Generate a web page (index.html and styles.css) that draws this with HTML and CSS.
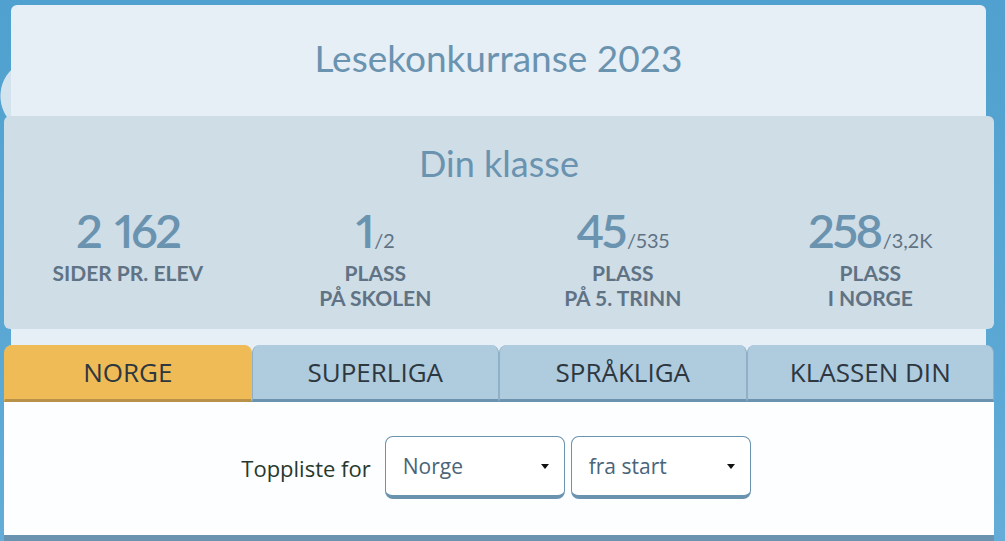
FILE: index.html
```html
<!DOCTYPE html>
<html lang="no">
<head>
<meta charset="utf-8">
<title>Lesekonkurranse 2023</title>
<link rel="stylesheet" href="styles.css">
</head>
<body>
<div class="page">
  <header class="hero">
    <h1 class="title">Lesekonkurranse 2023</h1>
  </header>
  <section class="stats">
    <h2 class="stats-title">Din klasse</h2>
    <div class="stats-grid">
      <div class="stat">
        <div class="stat-value">2 162</div>
        <div class="stat-label">SIDER PR. ELEV</div>
      </div>
      <div class="stat">
        <div class="stat-value">1<span class="of">/2</span></div>
        <div class="stat-label">PLASS<br>PÅ SKOLEN</div>
      </div>
      <div class="stat">
        <div class="stat-value">45<span class="of">/535</span></div>
        <div class="stat-label">PLASS<br>PÅ 5. TRINN</div>
      </div>
      <div class="stat">
        <div class="stat-value">258<span class="of">/3,2K</span></div>
        <div class="stat-label">PLASS<br>I NORGE</div>
      </div>
    </div>
  </section>
  <nav class="tabs">
    <div class="tab tab-active">NORGE</div>
    <div class="tab">SUPERLIGA</div>
    <div class="tab">SPRÅKLIGA</div>
    <div class="tab">KLASSEN DIN</div>
  </nav>
  <section class="panel">
    <div class="filter-row">
      <span class="filter-label">Toppliste for</span>
      <div class="select"><span>Norge</span><span class="caret"></span></div>
      <div class="select"><span>fra start</span><span class="caret"></span></div>
    </div>
  </section>
</div>
</body>
</html>
```

FILE: styles.css
```css
html, body {
  margin: 0;
  padding: 0;
}

body {
  background:
    radial-gradient(ellipse 30px 34px at 30px 96px, #d3e4ef 97%, rgba(211, 228, 239, 0) 100%),
    linear-gradient(180deg, #50a1cf 0%, #5aa7d4 60%, #63add8 100%);
  font-family: Lato, "Open Sans", sans-serif;
  overflow: hidden;
  height: 541px;
}

.page {
  width: 975px;
  margin: 5px 0 0 11px;
  background: #e6eef6;
  border-radius: 6px 6px 0 0;
}

.hero {
  padding: 31px 0 36px;
  text-align: center;
}

.title {
  margin: 0;
  font-size: 37px;
  line-height: 44px;
  font-weight: 400;
  color: #6a93b0;
}

.stats {
  margin: 0 -8px 0 -7px;
  background: #cfdde7;
  border-radius: 6px;
  padding: 26px 0 19px;
}

.stats-title {
  margin: 0;
  text-align: center;
  font-size: 36px;
  line-height: 42px;
  font-weight: 400;
  color: #6a93b0;
}

.stats-grid {
  display: grid;
  grid-template-columns: repeat(4, 1fr);
  margin-top: 21px;
}

.stat {
  text-align: center;
}

.stat-value {
  font-size: 47px;
  line-height: 50px;
  font-weight: 600;
  letter-spacing: -2.5px;
  word-spacing: 5px;
  font-variant-numeric: proportional-nums;
  color: #6a93b0;
}

.stat-value .of {
  font-size: 20px;
  line-height: 1;
  font-weight: 400;
  letter-spacing: 0;
  margin-left: 2px;
  color: #607384;
}

.stat-label {
  margin-top: 5px;
  font-size: 21px;
  line-height: 25px;
  font-weight: 700;
  color: #607384;
}

.tabs {
  display: flex;
  margin: 16px -8px 0 -7px;
}

.tab {
  flex: 1;
  height: 54px;
  box-sizing: content-box;
  display: flex;
  align-items: center;
  justify-content: center;
  background: #afcbde;
  border-left: 1px solid #8fb0c6;
  border-right: 1px solid #8fb0c6;
  border-bottom: 3px solid #6a93b0;
  border-radius: 8px 8px 0 0;
  font-family: "Open Sans", sans-serif;
  font-size: 26px;
  color: #2d3740;
}

.tab-active {
  background: #efbb57;
  border-left-color: #efbb57;
  border-right-color: #efbb57;
  border-bottom-color: #b9924a;
}

.panel {
  margin: 0 -8px 0 -7px;
  background: #fdfeff;
  padding: 34px 0 36px;
  border-bottom: 10px solid #6a93b0;
}

.filter-row {
  display: flex;
  justify-content: center;
  align-items: center;
  gap: 6px;
  padding-right: 6px;
}

.filter-label {
  font-family: "Open Sans", sans-serif;
  font-size: 22px;
  color: #28382c;
  margin-right: 8px;
}

.select {
  box-sizing: border-box;
  width: 180px;
  height: 63px;
  display: flex;
  align-items: center;
  justify-content: space-between;
  padding: 0 15px 0 17px;
  background: #ffffff;
  border: 1px solid #6a93b0;
  border-bottom-width: 4px;
  border-radius: 8px;
  font-family: "Open Sans", sans-serif;
  font-size: 21px;
  color: #4a6478;
}

.caret {
  width: 0;
  height: 0;
  border-left: 4px solid transparent;
  border-right: 4px solid transparent;
  border-top: 5px solid #111111;
}
```
